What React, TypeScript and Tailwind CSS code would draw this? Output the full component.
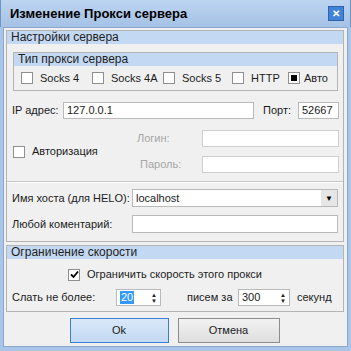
import React from 'react'

function Box({ checked, dot }: { checked?: boolean; dot?: boolean }) {
  return (
    <span className="flex h-[12px] w-[12px] shrink-0 items-center justify-center border border-[#8e8f8f] bg-white">
      {dot && <span className="h-[6px] w-[6px] bg-black" />}
      {checked && (
        <svg width="9" height="9" viewBox="0 0 9 9">
          <path d="M1 4.5 L3.5 7 L8 1.5" fill="none" stroke="#000" strokeWidth="1.8" />
        </svg>
      )}
    </span>
  )
}

function Field({ w, children, dim }: { w: string; children?: React.ReactNode; dim?: boolean }) {
  return (
    <div className={`flex h-[17px] shrink-0 items-center border bg-white pl-[3px] ${dim ? 'border-[#cfcfcf]' : 'border-[#b9b9b9]'} ${w}`}>
      {children}
    </div>
  )
}

function Spin({ w, value, selected }: { w: string; value: string; selected?: boolean }) {
  return (
    <div className={`flex h-[17px] shrink-0 items-center border border-[#b9b9b9] bg-white pl-[3px] ${w}`}>
      <span className={selected ? 'bg-[#3399ff] px-[1px] text-white' : ''}>{value}</span>
      <span className="ml-auto mr-[3px] flex flex-col items-center text-[6px] leading-[6px] text-[#222]">
        <span>▲</span>
        <span>▼</span>
      </span>
    </div>
  )
}

function Header({ text }: { text: string }) {
  return <div className="h-[13px] bg-[#c3d8f2] pl-[4px] text-[12px] leading-[13px] text-[#1e1e1e]">{text}</div>
}

export default function App() {
  const types = [
    { label: 'Socks 4', w: 'w-[71px]' },
    { label: 'Socks 4A', w: 'w-[71px]' },
    { label: 'Socks 5', w: 'w-[69px]' },
    { label: 'HTTP', w: 'w-[56px]' },
  ]
  return (
    <div className="flex h-[351px] w-[351px] flex-col whitespace-nowrap bg-[#a9c6e8] font-['Liberation_Sans',Arial,sans-serif] text-[11px] leading-[13px] text-[#1b1b1b]">
      {/* title bar */}
      <div className="flex h-[27px] shrink-0 items-center border-l border-r border-[#6f94c4] bg-gradient-to-b from-[#bcd4ef] to-[#a5c2e5]">
        <span className="pl-[9px] text-[13px] font-bold text-black">Изменение Прокси сервера</span>
        <span className="ml-auto mr-[6px] flex h-[15px] w-[16px] items-center justify-center border border-[#2f62b0] bg-[#4183d7] text-[10px] font-bold leading-none text-white">✕</span>
      </div>

      <div className="mx-[3px] h-[320px] shrink-0 border border-[#8aa9d0] bg-[#f0f0f0] px-[2px] pt-[2px]">
        {/* server settings */}
        <div className="h-[212px] w-[338px] border border-[#b4b4b4]">
          <Header text="Настройки сервера" />

          <div className="ml-[6px] mt-[8px] h-[39px] w-[325px] border border-[#b4b4b4]">
            <Header text="Тип прокси сервера" />
            <div className="flex h-[24px] items-center pl-[7px]">
              {types.map(t => (
                <div key={t.label} className={`flex items-center gap-[7px] ${t.w}`}>
                  <Box />
                  <span>{t.label}</span>
                </div>
              ))}
              <div className="flex items-center gap-[4px]">
                <Box dot />
                <span>Авто</span>
              </div>
            </div>
          </div>

          <div className="mt-[11px] flex items-center pl-[5px]">
            <span className="w-[51px]">IP адрес:</span>
            <Field w="w-[191px]">127.0.0.1</Field>
            <span className="ml-[9px] w-[35px]">Порт:</span>
            <Field w="w-[41px]">52667</Field>
          </div>

          <div className="mt-[11px] flex items-center pl-[6px]">
            <div className="flex w-[124px] items-center gap-[7px]">
              <Box />
              <span>Авторизация</span>
            </div>
            <div className="flex flex-col gap-[9px]">
              <div className="flex items-center">
                <span className="w-[65px] text-[#a6a6a6]">Логин:</span>
                <Field w="w-[137px]" dim />
              </div>
              <div className="flex items-center">
                <span className="w-[65px] pl-[3px] text-[#a6a6a6]">Пароль:</span>
                <Field w="w-[137px]" dim />
              </div>
            </div>
          </div>

          <div className="mt-[8px] h-[2px] border-t border-b border-t-[#c6c6c6] border-b-white" />

          <div className="mt-[6px] flex items-center pl-[5px]">
            <span className="w-[120px]">Имя хоста (для HELO):</span>
            <div className="flex h-[18px] w-[206px] items-center border border-[#b9b9b9] bg-white pl-[3px]">
              <span>localhost</span>
              <span className="ml-auto flex h-[16px] w-[16px] items-center justify-center bg-[#e6e6e6] text-[8px] text-black">▼</span>
            </div>
          </div>

          <div className="mt-[8px] flex items-center pl-[5px]">
            <span className="w-[120px]">Любой коментарий:</span>
            <div className="h-[18px] w-[206px] border border-[#b9b9b9] bg-white" />
          </div>
        </div>

        {/* speed limit */}
        <div className="mt-[3px] h-[67px] w-[338px] border border-[#b4b4b4]">
          <Header text="Ограничение скорости" />
          <div className="mt-[9px] flex items-center gap-[7px] pl-[61px]">
            <Box checked />
            <span>Ограничить скорость этого прокси</span>
          </div>
          <div className="mt-[8px] flex items-center pl-[5px]">
            <span className="w-[104px]">Слать не более:</span>
            <Spin w="w-[45px]" value="20" selected />
            <span className="ml-[26px] w-[51px]">писем за</span>
            <Spin w="w-[52px]" value="300" />
            <span className="ml-[7px]">секунд</span>
          </div>
        </div>

        <div className="mt-[6px] flex justify-center gap-[9px] pr-[2px]">
          <div className="flex h-[25px] w-[99px] items-center justify-center border border-[#3c7fd0] bg-gradient-to-b from-[#d9e8f8] to-[#c3daf3]">Ok</div>
          <div className="flex h-[25px] w-[102px] items-center justify-center border border-[#8c8c8c] bg-gradient-to-b from-[#f2f2f2] to-[#dedede]">Отмена</div>
        </div>
      </div>
    </div>
  )
}
